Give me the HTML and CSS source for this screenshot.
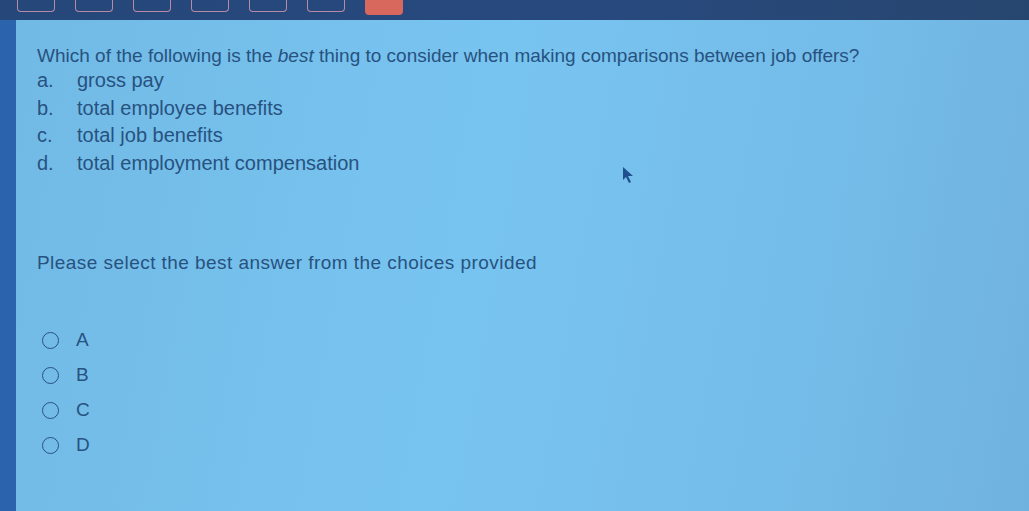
FILE: index.html
```html
<!DOCTYPE html>
<html>
<head>
<meta charset="utf-8">
<link rel="stylesheet" href="styles.css">
</head>
<body>
<div class="topbar">
  <span class="tab"></span><span class="tab"></span><span class="tab"></span><span class="tab"></span><span class="tab"></span><span class="tab"></span><span class="tab red"></span>
</div>
<div class="main">
  <div class="side"></div>
  <div class="content">
    <p class="question">Which of the following is the <i>best</i> thing to consider when making comparisons between job offers?</p>
    <ol class="opts">
      <li><span class="let">a.</span>gross pay</li>
      <li><span class="let">b.</span>total employee benefits</li>
      <li><span class="let">c.</span>total job benefits</li>
      <li><span class="let">d.</span>total employment compensation</li>
    </ol>
    <p class="prompt">Please select the best answer from the choices provided</p>
    <div class="radios">
      <label class="radio"><span class="circle"></span>A</label>
      <label class="radio"><span class="circle"></span>B</label>
      <label class="radio"><span class="circle"></span>C</label>
      <label class="radio"><span class="circle"></span>D</label>
    </div>
    <svg class="cursor" width="14" height="18" viewBox="0 0 14 18"><path d="M1 1 L1 14 L4 11 L7 17 L9 16 L6 10 L11 10 Z" fill="#1f4f8c"/></svg>
  </div>
</div>
</body>
</html>
```
FILE: styles.css
```css
html, body { margin: 0; padding: 0; }
body {
  width: 1029px;
  height: 511px;
  overflow: hidden;
  background: #72bdea;
  font-family: "Liberation Sans", Arial, sans-serif;
  color: #27527f;
}
.topbar {
  height: 20px;
  background: linear-gradient(90deg, #26477a 0%, #28497d 60%, #27466f 100%);
  display: flex;
  align-items: flex-start;
  gap: 20px;
  padding-left: 17px;
  box-sizing: border-box;
}
.tab {
  width: 38px;
  height: 12px;
  box-sizing: border-box;
  border: 1.5px solid #b98aa6;
  border-top: none;
  border-radius: 0 0 4px 4px;
}
.tab.red {
  background: #d8675d;
  border-color: #d8675d;
  height: 15px;
}
.main {
  display: flex;
  height: 491px;
}
.side {
  width: 16px;
  background: #2c63ad;
  flex: none;
}
.content {
  flex: 1;
  position: relative;
  background: linear-gradient(100deg, #72bae6 0%, #78c4f0 45%, #74bbe8 80%, #70b2df 100%);
  padding: 25px 0 0 21px;
  box-sizing: border-box;
}
.question {
  margin: 0;
  font-size: 19px;
  line-height: 22px;
}
.opts {
  list-style: none;
  margin: 0;
  padding: 0;
}
.opts li {
  font-size: 20px;
  line-height: 27.5px;
}
.let {
  display: inline-block;
  width: 40px;
}
.prompt {
  margin: 75px 0 0;
  font-size: 19px;
  line-height: 22px;
  letter-spacing: 0.45px;
}
.radios {
  margin-top: 56px;
  display: flex;
  flex-direction: column;
  gap: 15px;
}
.radio {
  display: flex;
  align-items: center;
  font-size: 19px;
  line-height: 20px;
  padding-left: 5px;
}
.circle {
  width: 17px;
  height: 17px;
  border: 1.8px solid #27527f;
  border-radius: 50%;
  box-sizing: border-box;
  margin-right: 17px;
}
.cursor {
  position: absolute;
  left: 606px;
  top: 146px;
}
```
